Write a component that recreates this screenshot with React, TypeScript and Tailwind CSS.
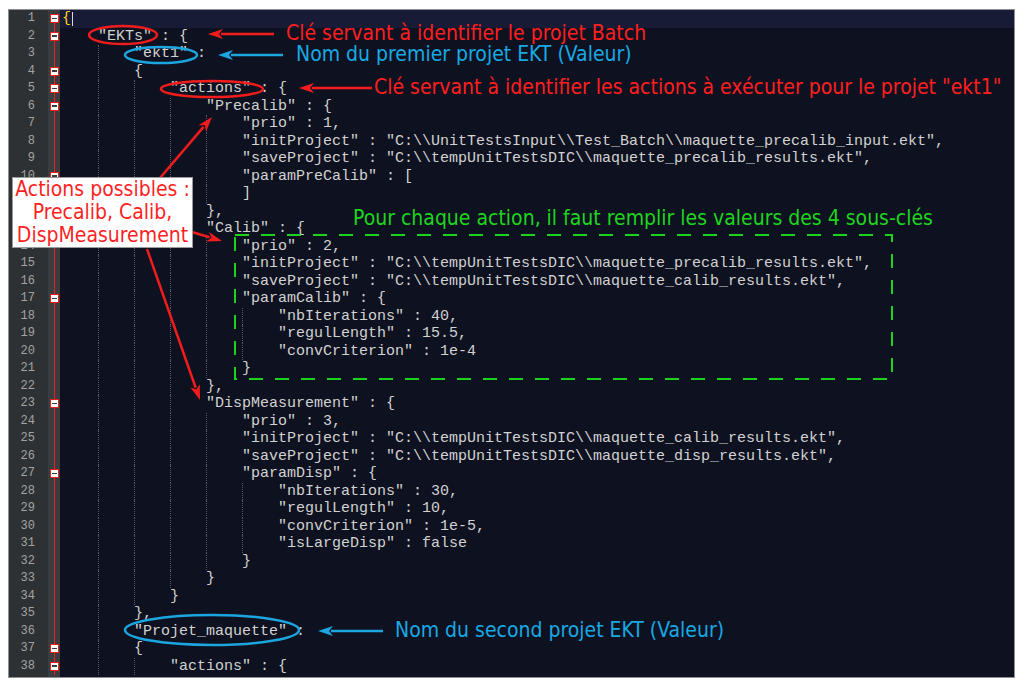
const lines: { level: number; text: string }[] = [
  { level: 0, text: "{" },
  { level: 1, text: '"EKTs" : {' },
  { level: 2, text: '"ekt1" :' },
  { level: 2, text: "{" },
  { level: 3, text: '"actions" : {' },
  { level: 4, text: '"Precalib" : {' },
  { level: 5, text: '"prio" : 1,' },
  { level: 5, text: '"initProject" : "C:\\\\UnitTestsInput\\\\Test_Batch\\\\maquette_precalib_input.ekt",' },
  { level: 5, text: '"saveProject" : "C:\\\\tempUnitTestsDIC\\\\maquette_precalib_results.ekt",' },
  { level: 5, text: '"paramPreCalib" : [' },
  { level: 5, text: "]" },
  { level: 4, text: "}," },
  { level: 4, text: '"Calib" : {' },
  { level: 5, text: '"prio" : 2,' },
  { level: 5, text: '"initProject" : "C:\\\\tempUnitTestsDIC\\\\maquette_precalib_results.ekt",' },
  { level: 5, text: '"saveProject" : "C:\\\\tempUnitTestsDIC\\\\maquette_calib_results.ekt",' },
  { level: 5, text: '"paramCalib" : {' },
  { level: 6, text: '"nbIterations" : 40,' },
  { level: 6, text: '"regulLength" : 15.5,' },
  { level: 6, text: '"convCriterion" : 1e-4' },
  { level: 5, text: "}" },
  { level: 4, text: "}," },
  { level: 4, text: '"DispMeasurement" : {' },
  { level: 5, text: '"prio" : 3,' },
  { level: 5, text: '"initProject" : "C:\\\\tempUnitTestsDIC\\\\maquette_calib_results.ekt",' },
  { level: 5, text: '"saveProject" : "C:\\\\tempUnitTestsDIC\\\\maquette_disp_results.ekt",' },
  { level: 5, text: '"paramDisp" : {' },
  { level: 6, text: '"nbIterations" : 30,' },
  { level: 6, text: '"regulLength" : 10,' },
  { level: 6, text: '"convCriterion" : 1e-5,' },
  { level: 6, text: '"isLargeDisp" : false' },
  { level: 5, text: "}" },
  { level: 4, text: "}" },
  { level: 3, text: "}" },
  { level: 2, text: "}," },
  { level: 2, text: '"Projet_maquette" :' },
  { level: 2, text: "{" },
  { level: 3, text: '"actions" : {' },
];

const folds = [1, 2, 4, 5, 6, 10, 13, 17, 23, 27, 37, 38];

const RED = "#f21c1c";
const BLUE = "#1ba6df";

function Arrow({ x1, y1, x2, y2, color }: { x1: number; y1: number; x2: number; y2: number; color: string }) {
  const dx = x2 - x1;
  const dy = y2 - y1;
  const len = Math.hypot(dx, dy);
  const ux = dx / len;
  const uy = dy / len;
  const bx = x2 - ux * 15;
  const by = y2 - uy * 15;
  const px = -uy * 5;
  const py = ux * 5;
  return (
    <g>
      <line x1={x1} y1={y1} x2={bx + ux * 2} y2={by + uy * 2} stroke={color} strokeWidth={2.5} />
      <polygon points={`${x2},${y2} ${bx + px},${by + py} ${bx + ux * 4},${by + uy * 4} ${bx - px},${by - py}`} fill={color} />
    </g>
  );
}

function CodeLine({ n, level, text }: { n: number; level: number; text: string }) {
  const current = n === 1;
  return (
    <div className={`flex h-[17.5px] items-stretch pl-[2px] ${current ? "bg-[#171b35]" : ""}`}>
      {Array.from({ length: level }).map((_, i) => (
        <span
          key={i}
          className={i === 0 ? "w-[36px] shrink-0" : "w-[36px] shrink-0 border-l border-dotted border-[#565962]"}
        />
      ))}
      <span className={`whitespace-pre leading-[17.5px] ${current ? "text-[#ffd21f]" : ""}`}>{text}</span>
      {current && <span className="ml-[1px] mt-[2px] h-[14px] w-px bg-[#d8d8d8]" />}
    </div>
  );
}

export default function App() {
  return (
    <div className="relative h-[685px] w-[1024px] overflow-hidden bg-white">
      <div className="ml-[8px] mt-[9px] flex h-[669px] w-[1007px] overflow-hidden border border-[#8e8e94] bg-[#0e1120]">
        <div className="w-[39px] shrink-0 bg-[#2e3133] pr-[13px] text-right font-['Liberation_Mono',monospace] text-[12px] text-[#a3a3a3]">
          {lines.map((_, i) => (
            <div key={i} className="h-[17.5px] leading-[17.5px]">
              {i + 1}
            </div>
          ))}
        </div>
        <div className="w-[12px] shrink-0 bg-[#3a3d40]">
          {lines.map((_, i) => {
            const n = i + 1;
            const hasFold = folds.includes(n);
            return (
              <div key={i} className="relative flex h-[17.5px] items-center justify-center">
                <div className={`w-px bg-[#e8201c] ${n === 1 ? "mt-[9px] h-[8.5px]" : "h-full"}`} />
                {hasFold && (
                  <div className="absolute left-[2px] top-[4px] flex h-[9px] w-[9px] items-center justify-center border border-[#e8201c] bg-white">
                    <div className="h-[1.5px] w-[5px] bg-[#3a3a3a]" />
                  </div>
                )}
              </div>
            );
          })}
        </div>
        <div className="flex-1 font-['Liberation_Mono','Courier_New',monospace] text-[15px] text-[#d2d2d2]">
          {lines.map((l, i) => (
            <CodeLine key={i} n={i + 1} level={l.level} text={l.text} />
          ))}
        </div>
      </div>

      <svg className="pointer-events-none absolute inset-0" width={1024} height={685} viewBox="0 0 1024 685">
        <ellipse cx={123} cy={35} rx={34} ry={9} fill="none" stroke={RED} strokeWidth={2.5} />
        <ellipse cx={161} cy={55} rx={36} ry={8} fill="none" stroke={BLUE} strokeWidth={2.5} />
        <ellipse cx={212} cy={89} rx={51} ry={8} fill="none" stroke={RED} strokeWidth={2.5} />
        <ellipse cx={212} cy={630} rx={87} ry={15} fill="none" stroke={BLUE} strokeWidth={2.5} />
        <Arrow x1={274} y1={34} x2={208} y2={34} color={RED} />
        <Arrow x1={283} y1={55} x2={218} y2={55} color={BLUE} />
        <Arrow x1={372} y1={88} x2={299} y2={88} color={RED} />
        <Arrow x1={383} y1={631} x2={318} y2={631} color={BLUE} />
        <Arrow x1={160} y1={178} x2={212} y2={117} color={RED} />
        <Arrow x1={192} y1={232} x2={222} y2={241} color={RED} />
        <Arrow x1={147} y1={249} x2={200} y2={400} color={RED} />
        <rect x={235} y={235} width={657} height={144} fill="none" stroke="#1ed21e" strokeWidth={2} strokeDasharray="14 12" />
      </svg>

      <div className="pointer-events-none absolute inset-0 font-['DejaVu_Sans','Liberation_Sans',sans-serif] text-[21px] font-stretch-condensed leading-[24px]">
        <div className="absolute left-[286px] top-[21px] whitespace-nowrap text-[#ff1f1f]">Clé servant à identifier le projet Batch</div>
        <div className="absolute left-[296px] top-[42px] whitespace-nowrap text-[#18a9e3]">Nom du premier projet EKT (Valeur)</div>
        <div className="absolute left-[374px] top-[75px] whitespace-nowrap text-[#ff1f1f]">
          Clé servant à identifier les actions à exécuter pour le projet "ekt1"
        </div>
        <div className="absolute left-[353px] top-[206px] whitespace-nowrap text-[#1fd41f]">
          Pour chaque action, il faut remplir les valeurs des 4 sous-clés
        </div>
        <div className="absolute left-[395px] top-[618px] whitespace-nowrap text-[#18a9e3]">Nom du second projet EKT (Valeur)</div>
        <div className="absolute left-[12px] top-[177px] flex h-[71px] w-[181px] flex-col items-center justify-center border border-[#9a9a9a] bg-white leading-[23px] text-[#ff1f1f]">
          <span>Actions possibles :</span>
          <span>Precalib, Calib,</span>
          <span>DispMeasurement</span>
        </div>
      </div>
    </div>
  );
}
